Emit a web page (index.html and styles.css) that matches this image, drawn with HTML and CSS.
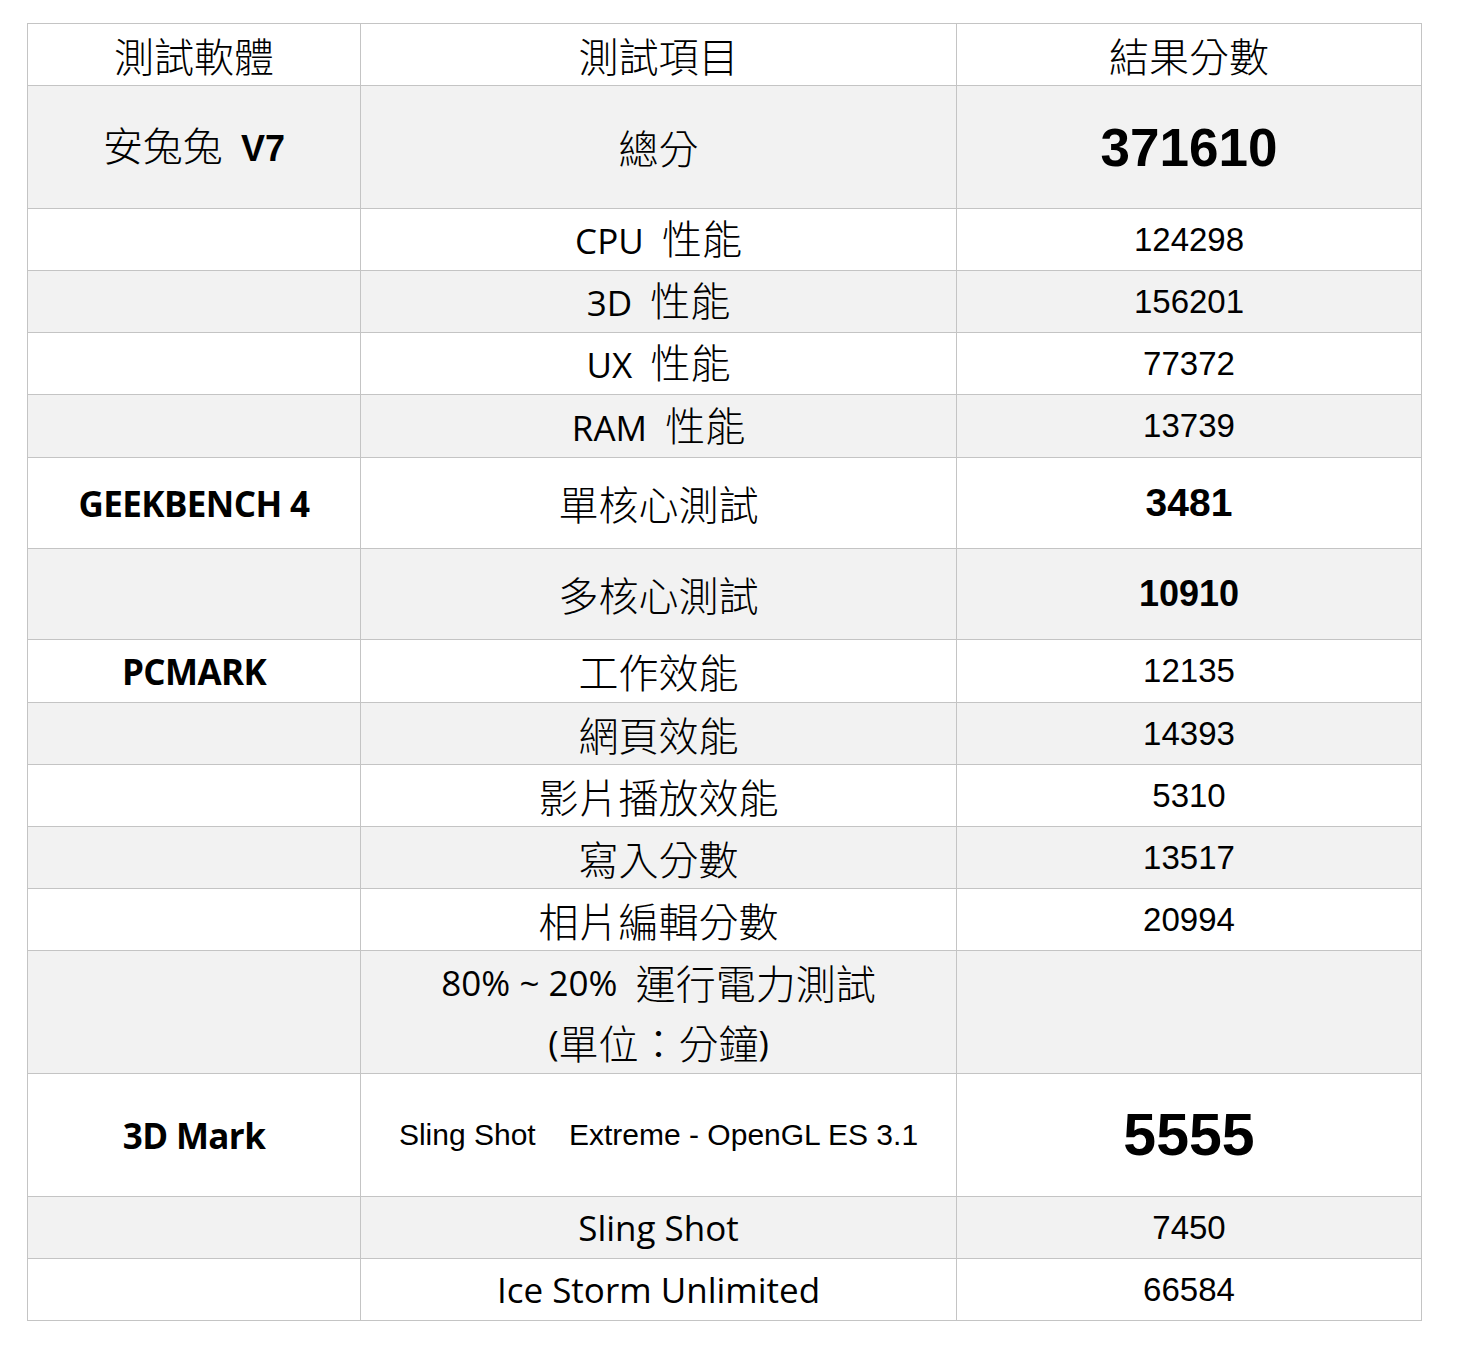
FILE: index.html
```html
<!DOCTYPE html>
<html lang="zh-Hant">
<head>
<meta charset="utf-8">
<title>測試結果</title>
<link rel="stylesheet" href="styles.css">
</head>
<body>
<table class="bench">
  <colgroup>
    <col class="c1"><col class="c2"><col class="c3">
  </colgroup>
  <tr class="h62 white">
    <td class="cjk">測試軟體</td>
    <td class="cjk">測試項目</td>
    <td class="cjk">結果分數</td>
  </tr>
  <tr class="h123 gray">
    <td class="mix"><span class="cjk">安兔兔</span>&nbsp;&nbsp;<b class="arialb">V7</b></td>
    <td class="cjk">總分</td>
    <td class="big">371610</td>
  </tr>
  <tr class="h62 white">
    <td></td>
    <td class="mix">CPU&nbsp;&nbsp;<span class="cjk">性能</span></td>
    <td class="num">124298</td>
  </tr>
  <tr class="h62 gray">
    <td></td>
    <td class="mix">3D&nbsp;&nbsp;<span class="cjk">性能</span></td>
    <td class="num">156201</td>
  </tr>
  <tr class="h62 white">
    <td></td>
    <td class="mix">UX&nbsp;&nbsp;<span class="cjk">性能</span></td>
    <td class="num">77372</td>
  </tr>
  <tr class="h63 gray">
    <td></td>
    <td class="mix">RAM&nbsp;&nbsp;<span class="cjk">性能</span></td>
    <td class="num">13739</td>
  </tr>
  <tr class="h91 white">
    <td class="lab">GEEKBENCH 4</td>
    <td class="cjk">單核心測試</td>
    <td class="numb l">3481</td>
  </tr>
  <tr class="h91 gray">
    <td></td>
    <td class="cjk">多核心測試</td>
    <td class="numb">10910</td>
  </tr>
  <tr class="h63 white">
    <td class="lab">PCMARK</td>
    <td class="cjk">工作效能</td>
    <td class="num">12135</td>
  </tr>
  <tr class="h62 gray">
    <td></td>
    <td class="cjk">網頁效能</td>
    <td class="num">14393</td>
  </tr>
  <tr class="h62 white">
    <td></td>
    <td class="cjk">影片播放效能</td>
    <td class="num">5310</td>
  </tr>
  <tr class="h62 gray">
    <td></td>
    <td class="cjk">寫入分數</td>
    <td class="num">13517</td>
  </tr>
  <tr class="h62 white">
    <td></td>
    <td class="cjk">相片編輯分數</td>
    <td class="num">20994</td>
  </tr>
  <tr class="h123 gray">
    <td></td>
    <td class="mix">
      <div class="line">80% ~ 20%&nbsp;&nbsp;<span class="cjk">運行電力測試</span></div>
      <div class="line">(<span class="cjk">單位：分鐘</span>)</div>
    </td>
    <td></td>
  </tr>
  <tr class="h123 white">
    <td class="lab">3D Mark</td>
    <td class="arial">Sling Shot &nbsp;&nbsp;&nbsp;Extreme - OpenGL ES 3.1</td>
    <td class="huge">5555</td>
  </tr>
  <tr class="h62 gray">
    <td></td>
    <td class="mix">Sling Shot</td>
    <td class="num">7450</td>
  </tr>
  <tr class="h62 white">
    <td></td>
    <td class="mix">Ice Storm Unlimited</td>
    <td class="num">66584</td>
  </tr>
</table>
</body>
</html>
```

FILE: styles.css
```css
html, body {
  margin: 0;
  padding: 0;
  background: #ffffff;
}

body {
  padding: 23px 0 0 27px;
  color: #000000;
}

.bench {
  border-collapse: collapse;
  table-layout: fixed;
  width: 1394px;
}

.c1 { width: 333px; }
.c2 { width: 596px; }
.c3 { width: 465px; }

.bench td {
  border: 1px solid #c4c4c4;
  padding: 0;
  text-align: center;
  vertical-align: middle;
  overflow: hidden;
  white-space: nowrap;
}

.white td { background: #ffffff; }
.gray td { background: #f2f2f2; }

.h62 { height: 62px; }
.h63 { height: 63px; }
.h91 { height: 91px; }
.h123 { height: 123px; }

.cjk {
  font-family: "Noto Sans CJK TC", "Noto Sans CJK SC", sans-serif;
  font-size: 40px;
  font-weight: 300;
  line-height: 1.2;
}

.mix {
  font-family: "Open Sans", "Noto Sans CJK TC", sans-serif;
  font-size: 35px;
  line-height: 1.2;
}

.mix .cjk {
  font-size: 40px;
  line-height: 1;
}

.line {
  height: 60px;
  display: flex;
  align-items: center;
  justify-content: center;
  line-height: 1;
}

.lab {
  font-family: "Open Sans", sans-serif;
  font-weight: 700;
  font-size: 35px;
  letter-spacing: -0.6px;
}

.num {
  font-family: "Liberation Sans", Arial, sans-serif;
  font-size: 33px;
}

.numb {
  font-family: "Liberation Sans", Arial, sans-serif;
  font-weight: 700;
  font-size: 36px;
}

.numb.l {
  font-size: 39px;
}

.arial {
  font-family: "Liberation Sans", Arial, sans-serif;
  font-size: 30px;
}

.arialb {
  font-family: "Liberation Sans", Arial, sans-serif;
  font-weight: 700;
  font-size: 36px;
}

.big {
  font-family: "Liberation Sans", Arial, sans-serif;
  font-weight: 700;
  font-size: 53px;
}

.huge {
  font-family: "Liberation Sans", Arial, sans-serif;
  font-weight: 700;
  font-size: 59px;
}
```
